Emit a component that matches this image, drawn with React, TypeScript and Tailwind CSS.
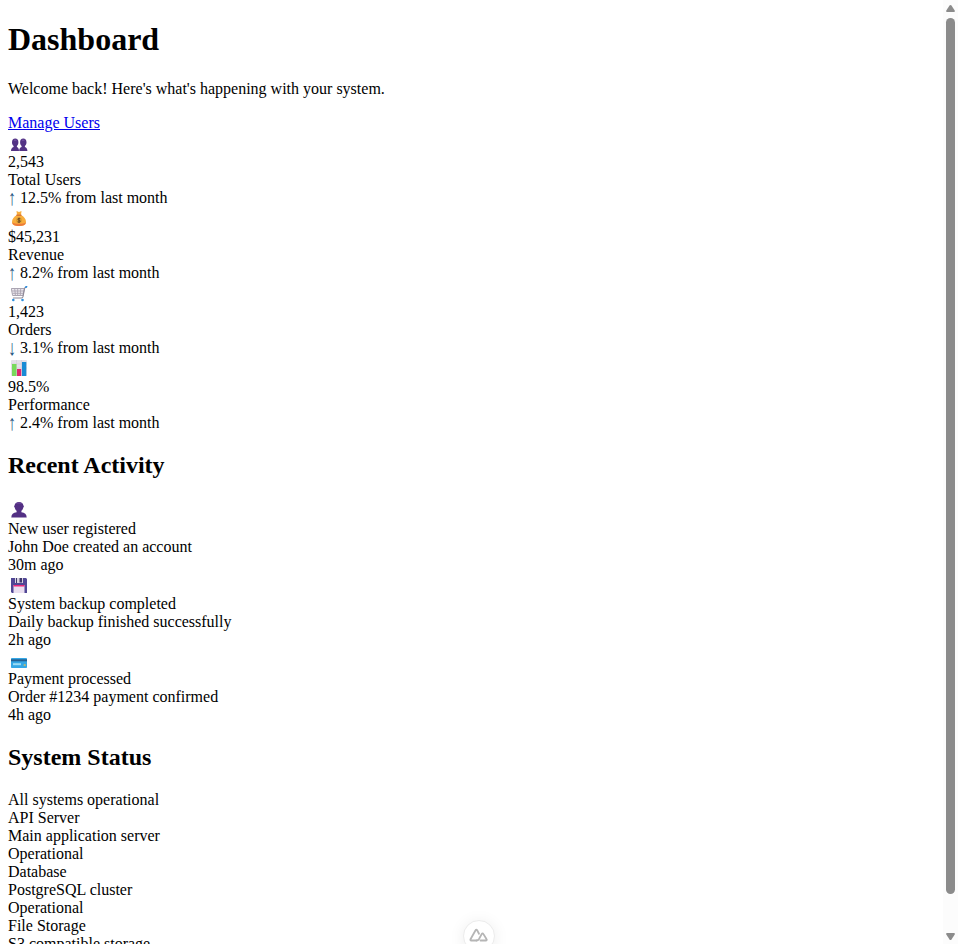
import React from "react";

type IconName = "users" | "money" | "cart" | "chart" | "user" | "disk" | "card";

function Drawing({ name }: { name: IconName }) {
  switch (name) {
    case "users":
      return (
        <g fill="#533385">
          <path d="M0 13c0-2.300.9-3.600 2.600-4.100v-1C1.600 7.200 1 6 1 4.500 .9 2.100 2.200.6 4.200.6s3.400 1.500 3.200 3.900C7.400 6 6.800 7.200 5.900 7.900v1C7.400 9.400 8 10.700 8 13z" />
          <path d="M8.200 13c0-2.300.6-3.600 2.400-4.100v-1C9.700 7.200 9.100 6 9.100 4.500 8.900 2.100 10.300.6 12.300.6s3.300 1.500 3.200 3.900c0 1.500-.6 2.700-1.600 3.400v1c1.700.5 2.500 1.800 2.500 4.100z" />
          <path d="M3 2.200h2.500M11 2.200h2.500" stroke="#7954a8" strokeWidth="1" />
        </g>
      );
    case "money":
      return (
        <g>
          <path d="M5.500 0 8 .9 10.500 0 10 4c3 1.500 5 4 5 7 0 2.800-2 4-7 4s-7-1.200-7-4c0-3 2-5.500 5-7z" fill="#f8ad3d" />
          <path d="M1.300 11.500C2 14.200 4 15 8 15s6.300-.8 6.900-3.500C13 13.300 3.200 13.200 1.300 11.500z" fill="#ec7a3c" />
          <path d="M5.300 4.200h5.200" stroke="#d36b30" strokeWidth="1.200" />
          <circle cx="8" cy="9.300" r="3" fill="#dda033" />
          <path d="M9.300 7.700c-2-.9-3 .3-2 1.200.8.500 2.200.4 2 1.400-.2 1-1.500 1-2.700.5M8 6.800v5" fill="none" stroke="#684622" strokeWidth="1" />
        </g>
      );
    case "cart":
      return (
        <g fill="none" strokeLinecap="round">
          <path d="M.7 2.500h12.600L12 9.500H2z" fill="#ebe8ee" stroke="#aaa4b1" strokeWidth="1" />
          <path d="M1.200 5h11.500M1.700 7.300h10.600M3.700 2.700l.7 6.500M6.700 2.700v6.500M9.700 2.700l-.4 6.500" stroke="#aaa4b1" strokeWidth=".9" />
          <path d="m15 1-1.300 1-1.700 8.700c-.2.900-.7 1.300-1.600 1.300H2.400" stroke="#8f8997" strokeWidth="1.100" />
          <path d="m14.700 1.200.9-.5" stroke="#298bdc" strokeWidth="1.600" />
          <circle cx="2.300" cy="14" r="1.300" fill="#3090dc" />
          <circle cx="11.500" cy="14" r="1.300" fill="#3090dc" />
        </g>
      );
    case "chart":
      return (
        <g>
          <rect width="16" height="16" rx="1" fill="#e5e0e9" />
          <path d="M0 4h16M0 8h16M5.500 0v16M10.500 0v16" stroke="#d1cbd6" strokeWidth=".6" />
          <rect x="1" y="4" width="4.500" height="12" fill="#79d95c" />
          <rect x="6" y="9" width="4.200" height="7" fill="#df2670" />
          <rect x="11" y="2" width="4.300" height="14" fill="#198bd5" />
        </g>
      );
    case "user":
      return (
        <g>
          <path d="M.3 15.500c.1-3.200 2-4.700 5.300-5.200V8.700C4.500 8 3.900 6.700 3.700 5.600 2.900 5 3 3.900 3.600 3.600 3.800 1.200 5.400 0 8 0s4.200 1.200 4.400 3.600c.6.300.7 1.400-.1 2-.2 1.100-.8 2.400-1.900 3.100v1.600c3.300.5 5.200 2 5.300 5.200z" fill="#533084" />
          <path d="M5.500 1.500c1.300-.6 3.700-.6 5 0" stroke="#714ba0" fill="none" />
        </g>
      );
    case "disk":
      return (
        <g>
          <path d="M0 0h15l1 1v14H1l-1-1z" fill="#514795" />
          <path d="M4 0h8v5H4z" fill="#d7d2e0" />
          <path d="M8.500 0H11v4.500H8.500zM5 0h1v5H5z" fill="#3f376c" />
          <path d="M2.500 7h11v8h-11z" fill="#eadff0" />
          <path d="M2.500 7h11v1.500h-11z" fill="#ec297b" />
        </g>
      );
    case "card":
      return (
        <g>
          <rect y="0" width="16" height="10" rx=".8" fill="#35a7e5" />
          <path d="M0 1.300h16v2H0z" fill="#245f91" />
          <path d="M2 5.200h8v2H2z" fill="#9bdcf5" />
          <path d="M12.700 6.300h2v1.500h-2z" fill="#d7bd58" />
        </g>
      );
  }
}

const iconBoxes: Record<IconName, { top: string; height: number }> = {
  users: { top: "pt-[6px]", height: 14 },
  money: { top: "pt-[4px]", height: 16 },
  cart: { top: "pt-[4px]", height: 16 },
  chart: { top: "pt-[3px]", height: 16 },
  user: { top: "pt-[3px]", height: 16 },
  disk: { top: "pt-[4px]", height: 16 },
  card: { top: "pt-[9px]", height: 11 },
};

function Icon({ name }: { name: IconName }) {
  const { top, height } = iconBoxes[name];
  return (
    <div className={`h-[21px] pl-[3px] ${top}`}>
      <svg className="block" width="17" height={height} viewBox={`0 0 17 ${height}`} aria-hidden="true">
        <Drawing name={name} />
      </svg>
    </div>
  );
}

const stats: { icon: IconName; value: string; label: string; arrow: string; change: string }[] = [
  { icon: "users", value: "2,543", label: "Total Users", arrow: "↑", change: "12.5% from last month" },
  { icon: "money", value: "$45,231", label: "Revenue", arrow: "↑", change: "8.2% from last month" },
  { icon: "cart", value: "1,423", label: "Orders", arrow: "↓", change: "3.1% from last month" },
  { icon: "chart", value: "98.5%", label: "Performance", arrow: "↑", change: "2.4% from last month" },
];

const activities: { icon: IconName; title: string; detail: string; time: string }[] = [
  { icon: "user", title: "New user registered", detail: "John Doe created an account", time: "30m ago" },
  { icon: "disk", title: "System backup completed", detail: "Daily backup finished successfully", time: "2h ago" },
  { icon: "card", title: "Payment processed", detail: "Order #1234 payment confirmed", time: "4h ago" },
];

const services = [
  { name: "API Server", detail: "Main application server", status: "Operational" },
  { name: "Database", detail: "PostgreSQL cluster", status: "Operational" },
  { name: "File Storage", detail: "S3 compatible storage", status: "" },
];

export default function App() {
  return (
    <div className="relative flex h-[944px] overflow-hidden bg-white font-['Liberation_Serif','Times_New_Roman',serif] text-[16px] leading-[18px] text-black">
      <main className="min-w-0 flex-1 pl-2">
        <h1 className="mt-[21px] mb-[22px] text-[32px] leading-[37px] font-bold">Dashboard</h1>
        <p className="mb-4">Welcome back! Here's what's happening with your system.</p>
        <div>
          <a href="#" className="text-[#0000ee] underline">Manage Users</a>
        </div>
        {stats.map((s) => (
          <section key={s.label}>
            <Icon name={s.icon} />
            <div>{s.value}</div>
            <div>{s.label}</div>
            <div>
              <span className="inline-block h-[18px] scale-y-135 align-top text-[#1b4f7c]">{s.arrow}</span> {s.change}
            </div>
          </section>
        ))}
        <h2 className="my-5 text-[24px] leading-[27px] font-bold">Recent Activity</h2>
        {activities.map((a) => (
          <section key={a.title}>
            <Icon name={a.icon} />
            <div>{a.title}</div>
            <div>{a.detail}</div>
            <div>{a.time}</div>
          </section>
        ))}
        <h2 className="my-5 text-[24px] leading-[27px] font-bold">System Status</h2>
        <div>All systems operational</div>
        {services.map((s) => (
          <section key={s.name}>
            <div>{s.name}</div>
            <div>{s.detail}</div>
            <div>{s.status}</div>
          </section>
        ))}
      </main>
      <aside className="flex w-[15px] shrink-0 flex-col items-center bg-[#fcfcfc]">
        <svg className="mt-[5px] block shrink-0" width="9" height="7" viewBox="0 0 9 7" aria-hidden="true">
          <path d="M4.500 0c.4 0 .7.200 1 .6L8.700 5.500c.4.700.1 1.500-.7 1.500H1c-.8 0-1.100-.8-.7-1.500L3.500.6c.3-.4.6-.6 1-.6z" fill="#8b8b8b" />
        </svg>
        <div className="mt-[6px] h-[876px] w-[9px] shrink-0 rounded-full bg-[#8b8b8b]" />
        <svg className="mt-[39px] block shrink-0" width="9" height="7" viewBox="0 0 9 7" aria-hidden="true">
          <path d="M4.500 7c.4 0 .7-.2 1-.6l3.200-4.900C9.100.8 8.800 0 8 0H1C.2 0-.1.800.3 1.500l3.200 4.900c.3.400.6.600 1 .6z" fill="#8b8b8b" />
        </svg>
      </aside>
      <div className="absolute top-[920px] left-[463px] flex h-[32px] w-[32px] justify-center rounded-full border border-[#ececec] bg-white pt-[7px] shadow-[0_2px_16px_rgba(0,0,0,0.08)]">
        <svg className="block" width="20" height="14" viewBox="0 0 20 14" fill="none" stroke="#b5b5b5" strokeWidth="1.800" strokeLinejoin="round" strokeLinecap="round" aria-hidden="true">
          <path d="M7.500 12.500H2.200c-.8 0-1-.6-.7-1.200L6.700 2c.3-.6 1-.6 1.300 0l2 3.700" />
          <path d="M7.500 12.500c1.200 0 1.900-.5 2.500-1.500l2.800-5.100c.4-.7 1.100-.7 1.500 0l3.300 5.400c.4.600.1 1.200-.7 1.200h-5.400" />
        </svg>
      </div>
    </div>
  );
}
